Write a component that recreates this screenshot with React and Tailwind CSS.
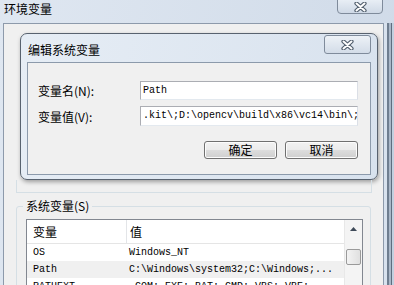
import React from 'react'

const cjk = "font-['Noto_Sans_CJK_SC',sans-serif]"
const mono = "font-['Liberation_Mono','Noto_Sans_CJK_SC',monospace]"

function CloseX() {
  return (
    <svg width="13" height="10" viewBox="0 0 13 10">
      <path d="M2.5 1.5 L10.5 8.5 M10.5 1.5 L2.5 8.5" stroke="#505d6c" strokeWidth="4.2" strokeLinecap="round" />
      <path d="M2.5 1.5 L10.5 8.5 M10.5 1.5 L2.5 8.5" stroke="#ffffff" strokeWidth="2" strokeLinecap="round" />
    </svg>
  )
}

const rows = [
  ['OS', 'Windows_NT'],
  ['Path', 'C:\\Windows\\system32;C:\\Windows;...'],
  ['PATHEXT', '.COM;.EXE;.BAT;.CMD;.VBS;.VBE;...'],
]

function WinButton({ children }) {
  return (
    <button
      type="button"
      className={`w-[73px] h-[18px] rounded-[3px] border border-[#707070] text-[12px] leading-[16px] text-black bg-[linear-gradient(#f2f2f2,#ebebeb_50%,#dddddd_50%,#cfcfcf)] shadow-[inset_0_0_0_1px_#fcfcfc] ${cjk}`}
    >
      {children}
    </button>
  )
}

export default function App() {
  return (
    <div className={`w-[394px] h-[285px] overflow-hidden flex flex-col bg-[linear-gradient(100deg,#dfe7f1,#cfdae8)] ${cjk}`}>
      {/* outer title bar */}
      <div className="h-[23px] flex items-start shrink-0">
        <span className="ml-[4px] mt-[2px] text-[12px] leading-[13px] text-black">环境变量</span>
        <div className="ml-auto mr-[11px] -mt-px w-[46px] h-[15px] rounded-b-[4px] border border-[#7f8b9b] bg-[linear-gradient(#e8eef5,#cfd9e6)] flex items-center justify-center">
          <CloseX />
        </div>
      </div>

      {/* outer body */}
      <div className="flex flex-1 min-h-0">
        <div className="w-[3px] shrink-0" />
        <div className="w-[381px] shrink-0 bg-[#f0f0f0] border-l border-t border-r border-[#8d9aab] flex flex-col">
          {/* edit dialog */}
          <div className="ml-[16px] mt-[9px] w-[358px] h-[147px] shrink-0 rounded-[7px] border border-[#58626f] bg-[linear-gradient(100deg,#e6edf5,#d8e2ee)] shadow-[1px_2px_4px_rgba(0,0,0,0.35)] flex flex-col px-[6px] pb-[4px]">
            <div className="h-[28px] flex items-start shrink-0">
              <span className="ml-[1px] mt-[9px] text-[12px] leading-[13px] text-black">编辑系统变量</span>
              <div className="ml-auto mt-px w-[47px] h-[19px] rounded-[3px] border border-[#7f8b9b] bg-[linear-gradient(#edf2f7,#d3dce8)] flex items-center justify-center">
                <CloseX />
              </div>
            </div>
            <div className="flex-1 border border-[#8c9aab] bg-[#f0f0f0] pt-[18px] pl-[10px] pr-[11px]">
              <div className="flex items-center h-[19px]">
                <span className="w-[102px] text-[12px] leading-[13px] text-black">变量名(N):</span>
                <div className={`w-[218px] h-[19px] bg-white border border-[#abadb3] border-b-[#e3e9ef] border-r-[#dbdfe6] pl-[2px] text-[10px] leading-[17px] text-black ${mono}`}>
                  Path
                </div>
              </div>
              <div className="flex items-center h-[20px] mt-[6px]">
                <span className="w-[102px] text-[12px] leading-[13px] text-black">变量值(V):</span>
                <div className={`w-[218px] h-[20px] bg-white border border-[#abadb3] border-b-[#e3e9ef] border-r-[#dbdfe6] pl-[2px] text-[10px] leading-[18px] text-black whitespace-nowrap overflow-hidden ${mono}`}>
                  .kit\;D:\opencv\build\x86\vc14\bin\;
                </div>
              </div>
              <div className="flex justify-end gap-[8px] mt-[15px] mr-px">
                <WinButton>确定</WinButton>
                <WinButton>取消</WinButton>
              </div>
            </div>
          </div>

          {/* tail of user variables group */}
          <div className="ml-[12px] w-[356px] h-[13px] shrink-0 border-l border-r border-b border-[#d5dfe5]" />

          {/* system variables group */}
          <fieldset className="ml-[12px] mt-[7px] w-[355px] flex-1 border border-[#d5dfe5] rounded-[3px] min-w-0">
            <legend className="ml-[6px] px-[3px] text-[12px] leading-[12px] text-black">系统变量(S)</legend>
            <div className="ml-[9px] mt-[7px] w-[337px] h-[80px] bg-white border border-[#828790] flex overflow-hidden">
              <div className="flex-1 flex flex-col">
                <div className="h-[24px] flex items-center border-b border-[#e5e5e5] shrink-0 text-[12px] text-black">
                  <span className="w-[100px] pl-[6px] h-full flex items-center border-r border-[#e3e5e8]">变量</span>
                  <span className="pl-[3px]">值</span>
                </div>
                {rows.map(([name, value], i) => (
                  <div
                    key={name}
                    className={`h-[17px] flex items-center shrink-0 text-[10px] text-black whitespace-nowrap ${mono} ${i === 1 ? 'bg-[#f0f0f0]' : ''}`}
                  >
                    <span className="w-[100px] pl-[6px]">{name}</span>
                    <span className="pl-[2px]">{value}</span>
                  </div>
                ))}
              </div>
              <div className="w-[18px] shrink-0 bg-[#f4f4f4] border-l border-[#e8e8e8] flex flex-col items-center">
                <div className="h-[17px] w-full flex items-center justify-center">
                  <svg width="7" height="4" viewBox="0 0 7 4">
                    <path d="M0 4 L3.5 0 L7 4 Z" fill="#3e4a58" />
                  </svg>
                </div>
                <div className="mt-[12px] w-[15px] h-[16px] rounded-[2px] border border-[#9a9a9a] bg-[linear-gradient(90deg,#f3f3f3,#e0e0e0)]" />
              </div>
            </div>
          </fieldset>
        </div>
        <div className="flex-1 flex">
          <div className="w-[3px] bg-[#d8e2ee]" />
          <div className="w-[2px] bg-[#6f7e90]" />
          <div className="w-[2px] bg-[#a9b7c8]" />
          <div className="w-[1px] bg-[#5f6d7e]" />
          <div className="flex-1 bg-[#c3d0df]" />
        </div>
      </div>
    </div>
  )
}
